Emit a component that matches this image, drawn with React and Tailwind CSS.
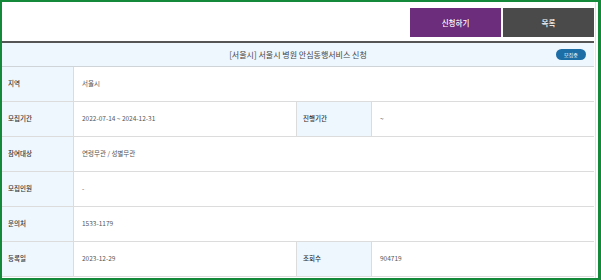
const rows = [
  { label: "지역", value: "서울시" },
  { label: "모집기간", value: "2022-07-14 ~ 2024-12-31", label2: "진행기간", value2: "~" },
  { label: "참여대상", value: "연령무관 / 성별무관" },
  { label: "모집인원", value: "-" },
  { label: "문의처", value: "1533-1179" },
  { label: "등록일", value: "2023-12-29", label2: "조회수", value2: "904719" },
];

function Row({ row }) {
  const label = "flex items-center bg-[#eef7fe] border-r border-[#dcdcdc] pl-[6px] text-[6.5px] font-medium text-[#333]";
  const value = "flex items-center border-r border-[#dcdcdc] pl-[8px] text-[6.5px] text-[#555]";
  return (
    <div className="grid grid-cols-[72px_223px_75px_1fr] h-[35px] border-b border-[#dcdcdc]">
      <div className={label}>{row.label}</div>
      {row.label2 ? (
        <>
          <div className={value}>{row.value}</div>
          <div className={label}>{row.label2}</div>
          <div className="flex items-center pl-[8px] text-[6.5px] text-[#555]">{row.value2}</div>
        </>
      ) : (
        <div className="col-span-3 flex items-center pl-[8px] text-[6.5px] text-[#555]">{row.value}</div>
      )}
    </div>
  );
}

export default function App() {
  return (
    <div
      className="w-[601px] h-[280px] overflow-hidden bg-white border-[#15893a] border-t-2 border-l-2 border-b-2 border-r-[3px] flex"
      style={{ fontFamily: '"Noto Sans CJK KR", "Noto Sans", sans-serif' }}
    >
      <div className="w-[592px] shrink-0">
        <div className="flex justify-end gap-[2px] pt-[6px]">
          <button className="w-[91px] h-[29px] bg-[#6b2d7c] text-white text-[7.5px] font-medium">신청하기</button>
          <button className="w-[91px] h-[29px] bg-[#4a4a4a] text-white text-[7.5px] font-medium">목록</button>
        </div>

        <div className="relative mt-[4px] h-[26px] border-t-2 border-[#555] border-b border-b-[#cfd4d8] bg-[#eef7fe] flex items-center justify-center">
          <span className="text-[8px] text-[#444]">[서울시] 서울시 병원 안심동행서비스 신청</span>
          <span className="absolute right-[8px] top-[6px] w-[30px] h-[11px] rounded-full bg-[#1d6ea6] text-white text-[5px] flex items-center justify-center">
            모집중
          </span>
        </div>

        {rows.map((row) => (
          <Row key={row.label} row={row} />
        ))}
      </div>
      <div className="w-[1px] ml-[1px] bg-[#e2e2e2]" />
    </div>
  );
}
